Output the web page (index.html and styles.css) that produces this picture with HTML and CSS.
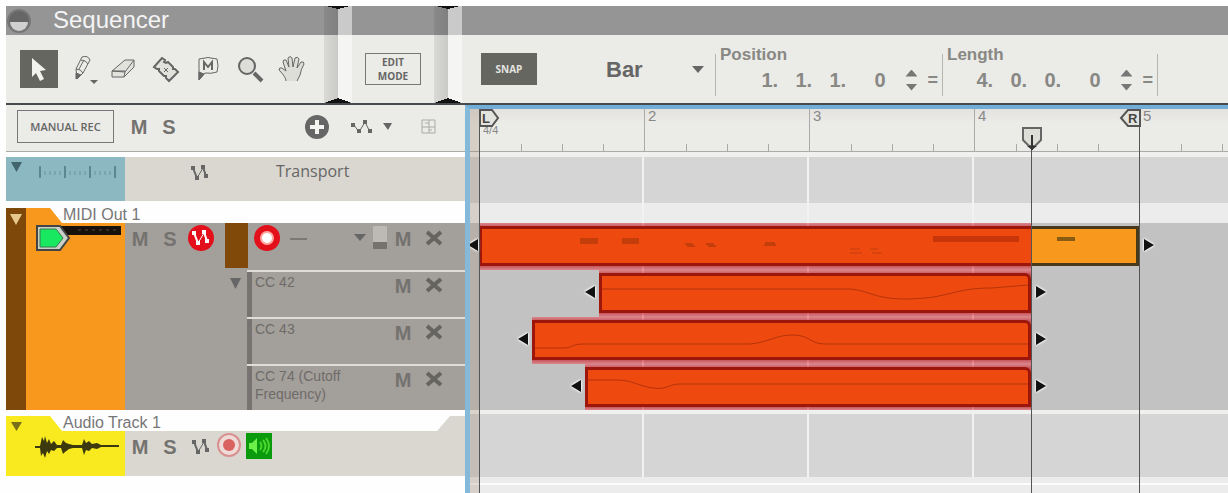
FILE: index.html
```
<!DOCTYPE html>
<html lang="en">
  <head>
    <meta charset="UTF-8" />
    <meta name="viewport" content="width=device-width, initial-scale=1.0" />
    <title>Sequencer</title>
    <link rel="stylesheet" href="styles.css">
  </head>
  <body>
    <svg hidden>
      <symbol id="nodes" viewBox="0 0 20 18">
        <path d="M3 4L7 14L13 4L16 12" fill="none" stroke="currentColor" />
        <path d="M1 2h4v4h-4zM5 12h4v4h-4zM11 1h4v4h-4zM14 10h4v4h-4z" fill="currentColor" />
        <path d="M3 4L7 14M13 3L16 12" fill="none" stroke="currentColor" stroke-width="2" />
      </symbol>
      <symbol id="cross" viewBox="0 0 16 16">
        <path d="M1 2L15 14M15 2L1 14" stroke="currentColor" stroke-width="4" />
      </symbol>
      <symbol id="down" viewBox="0 0 12 7">
        <path d="M0 0h12L6 7z" fill="currentColor" />
      </symbol>
    </svg>

    <header class="top">
      <section class="panel panel-tools">
        <div class="titlebar">
          <button class="fold" aria-label="Fold">
            <svg width="24" height="24" viewBox="0 0 24 24">
              <circle cx="12" cy="12" r="11" fill="#666" stroke="#777" stroke-width="2" />
              <path d="M3 13h18a9 9 0 0 1-18 0z" fill="#d0d0d0" />
            </svg>
          </button>
          <h1>Sequencer</h1>
        </div>
        <div class="tools">
          <button class="tool active" aria-label="Select">
            <svg width="38" height="38" viewBox="0 0 38 38">
              <path d="M12 8v19l4-4 4 8 4-2-4-8 6-1z" fill="#f2f2ee" />
            </svg>
          </button>
          <button class="tool tool-pencil" aria-label="Pencil">
            <svg width="28" height="32" viewBox="0 0 28 32">
              <path d="M5 16L11 4q6-2 8 3l-7 13-6 6zM5 16q5 0 7 4M10 7q5 0 7 4M8 16l5-9" />
              <path d="M5 26l0-6 5 2z" fill="#666" />
              <path d="M19 27h8l-4 4z" fill="#666" stroke="none" />
            </svg>
          </button>
          <button class="tool" aria-label="Eraser">
            <svg width="28" height="28" viewBox="0 0 28 28">
              <path d="M2 16L15 5h9l-9 12zM2 16v6h12l1-5M14 22l10-10V5" fill="#e2e2dd" />
              <path d="M2 16h13" />
            </svg>
          </button>
          <button class="tool" aria-label="Razor">
            <svg width="28" height="28" viewBox="0 0 28 28">
              <path d="M2 12L10 3l3 2-1 2 2 1 2-1 5 5 0 2 2 0 3 3-9 9-3-3 0-2-2 0-5-5 0-2-2 0z" fill="#e2e2dd" stroke-width="2" />
              <path d="M12 13l4 4M16 13l-4 4" />
            </svg>
          </button>
          <button class="tool tool-mute" aria-label="Mute">
            <svg width="24" height="26" viewBox="0 0 24 26">
              <path d="M3 3q9-3 18 0 2 7 0 13-6 2-12 1l-6 7z" />
              <path d="M3 16v8l5-6z" fill="#666" />
              <path d="M8 14V6l4 5 4-5v8" stroke-width="2" />
            </svg>
          </button>
          <button class="tool" aria-label="Zoom">
            <svg width="28" height="28" viewBox="0 0 28 28">
              <circle cx="11" cy="11" r="8" fill="#deded9" stroke-width="2" />
              <path d="M18 18l8 8" stroke-width="4" />
            </svg>
          </button>
          <button class="tool" aria-label="Hand">
            <svg width="30" height="30" viewBox="0 0 30 30">
              <path d="M9 27q0-4-7-11 0-3 3-2l4 3L6 8q0-3 3-2l3 7-1-9q2-3 4 0l1 9 2-9q3-2 4 1l-2 9 4-6q3-1 3 2-3 5-4 11l-3 6" fill="#deded9" />
            </svg>
          </button>
        </div>
      </section>

      <section class="panel panel-edit">
        <div class="titlebar"></div>
        <div class="tools">
          <button class="edit-mode">EDIT<br>MODE</button>
        </div>
      </section>

      <section class="panel panel-snap">
        <div class="titlebar"></div>
        <div class="tools">
          <button class="snap">SNAP</button>
          <div class="snap-value">
            <select aria-label="Snap value">
              <option>Bar</option>
            </select>
            <svg width="12" height="7"><use href="#down" /></svg>
          </div>
          <fieldset class="field field-position">
            <legend>Position</legend>
            <div class="digits">
              <input aria-label="Position bar" value="1."><input aria-label="Position beat" value="1."><input aria-label="Position sixteenth" value="1."><input aria-label="Position tick" class="tick" value="0">
              <span class="spin">
                <button aria-label="Position up"></button>
                <button aria-label="Position down" class="less"></button>
              </span>
              <span class="equals">=</span>
            </div>
          </fieldset>
          <fieldset class="field field-length">
            <legend>Length</legend>
            <div class="digits">
              <input aria-label="Length bar" value="4."><input aria-label="Length beat" value="0."><input aria-label="Length sixteenth" value="0."><input aria-label="Length tick" class="tick" value="0">
              <span class="spin">
                <button aria-label="Length up"></button>
                <button aria-label="Length down" class="less"></button>
              </span>
              <span class="equals">=</span>
            </div>
          </fieldset>
        </div>
      </section>
    </header>

    <main>
      <div class="tracks">
        <div class="track-tools">
          <button class="manual-rec">MANUAL REC</button>
          <button class="letter">M</button>
          <button class="letter">S</button>
          <button class="add" aria-label="Add lane">
            <svg width="24" height="24" viewBox="0 0 24 24">
              <circle cx="12" cy="12" r="12" fill="#666" />
              <path d="M12 5v14M5 12h14" stroke="#f4f4f0" stroke-width="4" />
            </svg>
          </button>
          <button class="automation" aria-label="Track parameter automation">
            <svg width="42" height="16" viewBox="0 0 42 16">
              <path d="M3 6L8 13L14 3L19 13" fill="none" stroke="#666" />
              <path d="M0 4h4v4h-4zM6 10h4v4h-4zM12 1h4v4h-4zM17 10h4v4h-4z" fill="#666" />
              <path d="M32 4h9l-4 7z" fill="#666" />
            </svg>
          </button>
          <button class="grid-icon" aria-label="Create pattern lane">
            <svg width="15" height="15" viewBox="0 0 15 15">
              <path d="M1 1h13v13H1zM8 1v13M1 8h13M4 4h4M8 11h3" fill="none" stroke="#aaa" />
            </svg>
          </button>
        </div>

        <div class="track transport">
          <div class="swatch">
            <svg class="collapse" width="11" height="10" viewBox="0 0 12 7" preserveAspectRatio="none"><path d="M0 0h12L6 7z" fill="#41646d" /></svg>
            <svg class="ruler-icon" width="80" height="14" viewBox="0 0 80 14">
              <path d="M2 1v12M27 1v12M52 1v12M77 1v12" stroke="#5d8790" stroke-width="2" />
              <path d="M7 6v4M12 6v4M17 6v4M22 6v4M32 6v4M37 6v4M42 6v4M47 6v4M57 6v4M62 6v4M67 6v4M72 6v4" stroke="#6a949d" />
            </svg>
          </div>
          <svg class="transport-nodes" width="20" height="18"><use href="#nodes" /></svg>
          <span>Transport</span>
        </div>

        <div class="track midi">
          <div class="tab"><span class="track-name">MIDI Out 1</span></div>
          <div class="track-body">
            <div class="strip">
              <svg width="12" height="11" viewBox="0 0 12 7" preserveAspectRatio="none"><path d="M0 0h12L6 7z" fill="#e6c98c" /></svg>
            </div>
            <div class="device">
              <svg width="88" height="30" viewBox="0 0 88 30">
                <path d="M24 3h61v9H24z" fill="#18100a" />
                <path d="M42 7h40" stroke="#5a4632" stroke-dasharray="3 4" />
                <path d="M1 3h23l9 12-9 12H1z" fill="#c8d0c8" stroke="#444" stroke-width="2" />
                <path d="M4 6h16l7 9-7 9H4z" fill="#18e860" stroke="#3c7650" />
              </svg>
            </div>
            <div class="channel">
              <button class="letter">M</button>
              <button class="letter">S</button>
              <button class="round" aria-label="Automation record">
                <svg width="26" height="26" viewBox="0 0 26 26">
                  <circle cx="13" cy="13" r="13" fill="#e30f1a" />
                  <use href="#nodes" x="3" y="4" width="20" height="18" color="#fff" />
                </svg>
              </button>
            </div>
            <div class="lanes">
              <div class="lane lane-main">
                <div class="lane-color"></div>
                <button class="round" aria-label="Record lane">
                  <svg width="26" height="26" viewBox="0 0 26 26">
                    <circle cx="13" cy="13" r="13" fill="#e30f1a" />
                    <circle cx="13" cy="13" r="6" fill="#fff" stroke="#ffa89f" stroke-width="2" />
                  </svg>
                </button>
                <span class="dash"></span>
                <svg class="lane-arrow" width="12" height="7"><use href="#down" /></svg>
                <span class="level"></span>
                <button class="letter">M</button>
                <button class="close" aria-label="Delete lane"><svg width="16" height="16"><use href="#cross" /></svg></button>
              </div>
              <div class="lane">
                <svg class="lane-fold" width="11" height="11" viewBox="0 0 12 7" preserveAspectRatio="none"><path d="M0 0h12L6 7z" fill="#666" /></svg>
                <span class="lane-name">CC 42</span>
                <button class="letter">M</button>
                <button class="close" aria-label="Delete CC 42"><svg width="16" height="16"><use href="#cross" /></svg></button>
              </div>
              <div class="lane">
                <span class="lane-name">CC 43</span>
                <button class="letter">M</button>
                <button class="close" aria-label="Delete CC 43"><svg width="16" height="16"><use href="#cross" /></svg></button>
              </div>
              <div class="lane">
                <span class="lane-name">CC 74 (Cutoff Frequency)</span>
                <button class="letter">M</button>
                <button class="close" aria-label="Delete CC 74"><svg width="16" height="16"><use href="#cross" /></svg></button>
              </div>
            </div>
          </div>
        </div>

        <div class="track audio">
          <div class="tab"><span class="track-name">Audio Track 1</span></div>
          <div class="track-body">
            <div class="wave">
              <svg class="wave-fold" width="11" height="9" viewBox="0 0 12 7" preserveAspectRatio="none"><path d="M0 0h12L6 7z" fill="#7a701a" /></svg>
              <svg width="86" height="24" viewBox="0 0 86 24">
                <path d="M0 11H5L7 2L9 6L10 1L12 8L14 4L16 9L19 6L22 10H26L28 5L31 8L34 9L38 10H47L49 4L51 8L54 6L57 9L62 8L66 10H84V12H66L62 14L57 13L54 16L51 15L49 20L47 13H38L34 14L30 17L28 19L26 13H22L19 16L16 15L14 19L12 16L10 23L8 18L6 21L5 13H0z" fill="#3c390f" />
              </svg>
            </div>
            <div class="channel">
              <button class="letter">M</button>
              <button class="letter">S</button>
              <svg class="audio-nodes" width="20" height="18"><use href="#nodes" /></svg>
              <button class="round" aria-label="Record enable">
                <svg width="24" height="24" viewBox="0 0 24 24">
                  <circle cx="12" cy="12" r="11" fill="#eedbd7" stroke="#d9908f" stroke-width="2" />
                  <circle cx="12" cy="12" r="6" fill="#d9615f" />
                </svg>
              </button>
              <button class="monitor" aria-label="Monitor">
                <svg width="26" height="26" viewBox="0 0 26 26">
                  <path d="M3 10h3l5-5v16l-5-5H3z" fill="#6df04a" />
                  <path d="M14 9q3 4 0 8M17 7q5 6 0 12M20 5q6 8 0 16" fill="none" stroke="#4cd52c" stroke-width="2" />
                </svg>
              </button>
            </div>
          </div>
        </div>
      </div>

      <div class="timeline">
        <div class="ruler">
          <div class="bar"><span class="signature">4/4</span></div>
          <div class="bar">2</div>
          <div class="bar">3</div>
          <div class="bar">4</div>
          <div class="bar">5</div>
        </div>
        <div class="row row-transport"></div>
        <div class="row row-gap"></div>
        <div class="row row-clips">
          <div class="clip-lane">
            <div class="tint" style="left: 0; width: 552px"></div>
            <div class="clip note-clip rest" style="left: 552px; width: 108px">
              <svg width="102" height="34" viewBox="0 0 102 34">
                <path d="M26 8h18v4h-18z" fill="#8a5c12" />
              </svg>
            </div>
            <div class="clip note-clip recorded" style="left: 0; width: 552px">
              <svg width="546" height="34" viewBox="0 0 546 34">
                <g stroke="#c43e0c" stroke-width="2">
                  <path d="M98 10h18M98 12h18M98 14h18M140 10h17M140 12h17M140 14h17" />
                  <path d="M203 15h8M205 17h8M224 15h8M226 17h8M283 14h10M282 16h12" />
                  <path d="M368 20h10M368 24h12M388 20h8M390 24h10" stroke-width="1" />
                </g>
                <path d="M451 7h86v6h-86z" fill="#c83508" />
              </svg>
            </div>
          </div>
          <div class="clip-lane">
            <div class="tint" style="left: 120px; width: 432px"></div>
            <div class="clip recorded curve" style="left: 120px; width: 432px">
              <svg width="426" height="33" viewBox="0 0 426 33">
                <path d="M0 13H248C270 15 270 23 306 23C350 22 350 12 390 12L426 9" />
              </svg>
            </div>
          </div>
          <div class="clip-lane">
            <div class="tint" style="left: 53px; width: 499px"></div>
            <div class="clip recorded curve" style="left: 53px; width: 499px">
              <svg width="493" height="33" viewBox="0 0 493 33">
                <path d="M0 25H30C38 24 38 21 48 21H215C235 19 240 12 258 12C275 12 275 21 290 21H493" />
              </svg>
            </div>
          </div>
          <div class="clip-lane">
            <div class="tint" style="left: 106px; width: 446px"></div>
            <div class="clip recorded curve" style="left: 106px; width: 446px">
              <svg width="440" height="33" viewBox="0 0 440 33">
                <path d="M0 10H28C45 10 50 16 65 18C80 20 80 14 92 14H440" />
              </svg>
            </div>
          </div>
        </div>
        <div class="row row-audio"></div>
        <div class="row row-end"></div>

        <div class="locator locator-left"></div>
        <div class="locator playhead"></div>
        <div class="locator locator-right"></div>
        <svg class="flag flag-left" width="22" height="18" viewBox="0 0 22 18">
          <path d="M1 1h12l6 8-6 8H1z" fill="#e4e4df" stroke="#555" stroke-width="2" />
          <text x="3" y="14">L</text>
        </svg>
        <svg class="flag flag-right" width="22" height="18" viewBox="0 0 22 18">
          <path d="M21 1H9L2 9l7 8h12z" fill="#e4e4df" stroke="#555" stroke-width="2" />
          <text x="9" y="14">R</text>
        </svg>
        <svg class="flag flag-play" width="22" height="24" viewBox="0 0 22 24">
          <path d="M2 2h18v12l-6 6h-6l-6-6z" fill="#deded9" stroke="#666" stroke-width="2" />
          <path d="M6 20h10l-5 4zM10 9h2v15h-2z" fill="#333" />
        </svg>
      </div>
    </main>
  </body>
</html>
```
FILE: styles.css
```
* {
  box-sizing: border-box;
  margin: 0;
}
html {
  height: 100%;
}
body {
  display: flex;
  flex-direction: column;
  min-height: 100%;
  padding: 6px 0 0 6px;
  background-color: #fefefe;
  color: #666;
  font-family: "Liberation Sans", Arial, sans-serif;
  overflow: hidden;
}
button {
  display: grid;
  place-content: center;
  padding: 0;
  border: none;
  background: none;
  color: inherit;
  font: inherit;
}
svg {
  display: block;
  flex-shrink: 0;
}
svg[hidden] {
  display: none;
}

/* top panels */
.top {
  display: flex;
  border-bottom: 2px solid #454a4c;
}
.panel {
  position: relative;
}
.panel-tools {
  width: 332px;
}
.panel-edit {
  width: 110px;
}
.panel-snap {
  flex: 1;
}
.panel::before,
.panel::after {
  content: "";
  position: absolute;
  top: 0;
  bottom: 0;
  width: 14px;
  pointer-events: none;
}
.panel::before {
  left: 0;
  background:
    linear-gradient(to top left, transparent 50%, #111 51%) left top / 12px 3px no-repeat,
    linear-gradient(to bottom left, transparent 50%, #111 51%) left bottom / 14px 5px no-repeat,
    rgba(255, 255, 255, 0.5);
}
.panel::after {
  right: 0;
  background:
    linear-gradient(to top right, transparent 50%, #111 51%) right top / 12px 3px no-repeat,
    linear-gradient(to bottom right, transparent 50%, #111 51%) right bottom / 14px 5px no-repeat,
    linear-gradient(to right, rgba(0, 0, 0, 0.08), rgba(0, 0, 0, 0.14));
}
.panel-tools::before,
.panel-snap::after {
  display: none;
}
.titlebar {
  display: flex;
  align-items: center;
  gap: 22px;
  height: 29px;
  padding-left: 1px;
  background-color: #959595;
}
.titlebar h1 {
  padding-bottom: 2px;
  color: #f4f4f4;
  font-size: 24px;
  font-weight: normal;
  line-height: 24px;
}
.tools {
  display: flex;
  align-items: center;
  height: 68px;
  background-color: #ebebe7;
}
.panel-tools .tools {
  padding-left: 14px;
}
.tool {
  width: 42px;
  height: 38px;
  fill: none;
  stroke: #666;
}
.tool.active {
  width: 38px;
  margin-right: 3px;
  background-color: #666661;
  stroke: none;
}
.tool-pencil {
  padding-left: 6px;
}
.edit-mode,
.snap {
  width: 56px;
  height: 32px;
  font-family: "Open Sans", sans-serif;
  font-size: 10px;
  font-weight: bold;
  line-height: 14px;
}
.edit-mode {
  margin-left: 27px;
  border: 1px solid #777;
}
.snap {
  margin-left: 33px;
  background-color: #666661;
  color: #e4e4e0;
}
.snap-value {
  display: flex;
  align-items: center;
  width: 178px;
  padding: 0 11px 0 69px;
}
.snap-value select {
  flex: 1;
  padding: 0;
  border: none;
  appearance: none;
  background: none;
  color: #666;
  font-family: inherit;
  font-size: 22px;
  font-weight: bold;
}
.field {
  height: 54px;
  padding: 0;
  border: none;
  border-left: 1px solid #b5b5b2;
  color: #888884;
  font-weight: bold;
}
.field-position {
  width: 227px;
}
.field-length {
  width: 216px;
  border-right: 1px solid #b5b5b2;
}
.field legend {
  padding: 2px 0 0 4px;
  font-size: 17px;
  line-height: 22px;
}
.digits {
  display: flex;
  align-items: center;
  justify-content: flex-end;
  padding-right: 4px;
}
.digits input {
  width: 34px;
  padding: 0;
  border: none;
  background: none;
  color: inherit;
  font-family: inherit;
  font-size: 20px;
  font-weight: bold;
  line-height: 28px;
}
.digits .tick {
  width: 31px;
  margin-left: 11px;
}
.spin {
  display: grid;
  gap: 7px;
}
.spin button {
  width: 12px;
  height: 7px;
  background-color: #777;
  clip-path: polygon(50% 0, 100% 100%, 0 100%);
}
.spin .less {
  clip-path: polygon(0 0, 100% 0, 50% 100%);
}
.equals {
  padding-left: 10px;
  font-size: 18px;
}

/* track list */
main {
  display: flex;
  flex: 1;
}
.tracks {
  width: 459px;
  flex-shrink: 0;
}
.letter {
  width: 18px;
  color: #74726f;
  font-size: 20px;
  font-weight: bold;
  line-height: 24px;
}
.track-tools {
  display: flex;
  align-items: center;
  height: 47px;
  margin-bottom: 5px;
  padding: 0 0 3px 11px;
  border-bottom: 1px solid #aaa;
  background-color: #ebebe7;
}
.manual-rec {
  width: 97px;
  height: 33px;
  margin-right: 16px;
  border: 1px solid #777;
  font-family: "Open Sans", sans-serif;
  font-size: 11px;
  font-weight: 600;
}
.letter + .letter {
  margin-left: 12px;
}
.add {
  margin-left: 127px;
}
.automation {
  margin-left: 22px;
}
.grid-icon {
  margin-left: 28px;
}
.transport {
  display: flex;
  height: 44px;
  margin-bottom: 7px;
  background-color: #d9d7d0;
  font-family: "Open Sans", sans-serif;
  font-size: 16px;
  line-height: 28px;
}
.swatch {
  display: flex;
  gap: 16px;
  width: 119px;
  padding: 5px 0 0 5px;
  background-color: #8bb8c1;
}
.ruler-icon {
  margin-top: 3px;
}
.transport-nodes {
  margin: 7px 66px 0 65px;
}
.tab {
  height: 15px;
  padding-left: 44px;
}
.track-name {
  display: block;
  height: 15px;
  padding-left: 13px;
  background-color: #fefefe;
  color: #777;
  font-size: 16px;
  line-height: 14px;
}
.midi .tab {
  background: linear-gradient(to right, #7d480a 20px, #f8981d 20px);
}
.midi .track-name {
  clip-path: polygon(0 0, 100% 0, 100% 100%, 12px 100%);
}
.audio .tab {
  background: linear-gradient(to right, #f8ea1f 119px, #d9d7d0 119px);
}
.audio .track-name {
  clip-path: polygon(0 0, 400px 0, 387px 100%, 12px 100%);
}
.track-body {
  display: flex;
}
.midi .track-body {
  height: 187px;
  background-color: #a39f9b;
}
.strip {
  width: 20px;
  background-color: #7d480a;
}
.strip svg {
  margin: -9px 0 0 4px;
}
.device {
  width: 99px;
  padding-left: 10px;
  background-color: #f8981d;
}
.channel {
  display: flex;
  align-items: flex-start;
  width: 100px;
  padding: 4px 0 0 6px;
}
.channel .round {
  margin-left: 9px;
}
.midi .channel .round {
  margin-top: -2px;
}
.lanes {
  flex: 1;
}
.lane {
  display: flex;
  align-items: flex-start;
  justify-content: flex-end;
  height: 47px;
  padding: 3px 23px 0 0;
}
.lane + .lane {
  background:
    linear-gradient(#deddd8, #deddd8) right top / 218px 2px no-repeat,
    linear-gradient(#777370, #777370) 22px 0 / 5px 100% no-repeat;
}
.lane:last-child {
  height: 46px;
}
.lane .letter {
  margin-top: 1px;
}
.close {
  margin: 4px 0 0 14px;
  color: #666461;
}
.lane-color {
  width: 23px;
  height: 45px;
  margin: -3px 6px 0 0;
  background-color: #80490a;
}
.lane-main .round {
  margin-top: -1px;
}
.dash {
  width: 17px;
  height: 2px;
  margin: 12px auto 0 10px;
  background-color: #7b7875;
}
.lane-arrow {
  margin: 8px 7px 0 0;
}
.level {
  width: 14px;
  height: 23px;
  margin-right: 7px;
  background: linear-gradient(#bdbab6 16px, #74716e 16px);
}
.lane-fold {
  margin: 5px auto 0 5px;
}
.lane-name {
  width: 102px;
  margin-right: 37px;
  color: #6f6b68;
  font-size: 14px;
  line-height: 18px;
}
.audio {
  margin-top: 6px;
}
.audio .track-body {
  height: 45px;
  background-color: #d9d7d0;
}
.wave {
  width: 119px;
  background-color: #f8ea1f;
}
.wave-fold {
  margin: -9px 0 4px 5px;
}
.wave svg:last-child {
  margin-left: 29px;
}
.audio .channel {
  width: auto;
}
.audio-nodes {
  margin: 3px 0 0 12px;
}
.audio .round {
  margin-top: -2px;
}
.audio .channel .round {
  margin-left: 6px;
}
.monitor {
  margin: -2px 0 0 5px;
  background-color: #0a9a0e;
}

/* timeline */
.timeline {
  position: relative;
  flex: 1;
  display: flex;
  flex-direction: column;
  min-width: 0;
  border-top: 4px solid #71add6;
  border-left: 5px solid #84b9da;
  background-color: #f0f0ee;
  overflow: hidden;
}
.timeline::before {
  content: "";
  position: absolute;
  top: 0;
  bottom: 0;
  left: 0;
  width: 9px;
  background-color: rgba(150, 125, 100, 0.25);
}
.ruler {
  display: flex;
  height: 43px;
  padding-left: 9px;
  border-bottom: 1px solid #aaa;
  background: linear-gradient(#e4e2de, #ebebe7 14px);
}
.bar {
  flex-shrink: 0;
  width: 165px;
  padding-left: 3px;
  border-left: 1px solid #aaa;
  background:
    linear-gradient(#aaa, #aaa) 41px 100% / 1px 7px no-repeat,
    linear-gradient(#aaa, #aaa) 82px 100% / 1px 7px no-repeat,
    linear-gradient(#aaa, #aaa) 123px 100% / 1px 7px no-repeat;
  color: #888;
  font-size: 15px;
  line-height: 14px;
}
.signature {
  display: block;
  padding-top: 14px;
  font-size: 11px;
}
.row {
  padding-left: 9px;
  background-color: #d5d5d5;
  background-image: repeating-linear-gradient(to right, transparent 0 163px, #f2f2f2 163px 165px);
  background-origin: content-box;
  background-repeat: no-repeat;
  background-size: 496px 100%;
}
.row-transport {
  height: 46px;
  margin-top: 5px;
}
.row-gap {
  height: 20px;
  background-color: #ececec;
}
.row-clips {
  height: 187px;
  background-color: #c2c2c2;
}
.row-audio {
  height: 63px;
  margin-top: 4px;
}
.row-end {
  flex: 1;
  min-height: 16px;
  background: linear-gradient(#ececec 6px, #fdfdfd 6px, #fdfdfd 8px, #ececec 8px);
}
.clip-lane {
  position: relative;
  height: 47px;
}
.clip-lane:last-child {
  height: 46px;
}
.tint {
  position: absolute;
  top: 0;
  bottom: 0;
  background: linear-gradient(
    rgba(235, 95, 105, 0.6),
    rgba(200, 40, 50, 0.7) 4px,
    rgba(200, 40, 50, 0.7) 43px,
    rgba(235, 95, 105, 0.6)
  );
}
.clip {
  position: absolute;
  top: 3px;
  height: 40px;
  border: 3px solid #9d160c;
  background-color: #ee4a10;
}
.recorded.note-clip {
  border-right: none;
}
.rest {
  border-color: #47391a;
  border-left: none;
  background-color: #f8981d;
}
.curve {
  border-top-right-radius: 6px;
}
.curve path {
  fill: none;
  stroke: #b5330a;
}
.clip::before,
.clip::after {
  content: "";
  position: absolute;
  top: 10px;
  border: 6px solid transparent;
  filter: drop-shadow(0 0 1px #fff) drop-shadow(0 0 1px #fff);
}
.clip::before {
  left: -17px;
  border-left: none;
  border-right: 10px solid #111;
}
.clip::after {
  right: -18px;
  border-right: none;
  border-left: 10px solid #111;
}
.note-clip.recorded::before {
  left: -14px;
}
.rest::before,
.note-clip.recorded::after {
  display: none;
}
.locator {
  position: absolute;
  top: 0;
  bottom: 0;
  width: 1px;
  background-color: #555;
}
.locator-left {
  left: 9px;
}
.playhead {
  top: 36px;
  left: 561px;
}
.locator-right {
  left: 669px;
}
.flag {
  position: absolute;
}
.flag text {
  fill: #444;
  font-size: 13px;
  font-weight: bold;
}
.flag-left {
  left: 9px;
}
.flag-right {
  left: 649px;
}
.flag-play {
  top: 17px;
  left: 551px;
}
```
